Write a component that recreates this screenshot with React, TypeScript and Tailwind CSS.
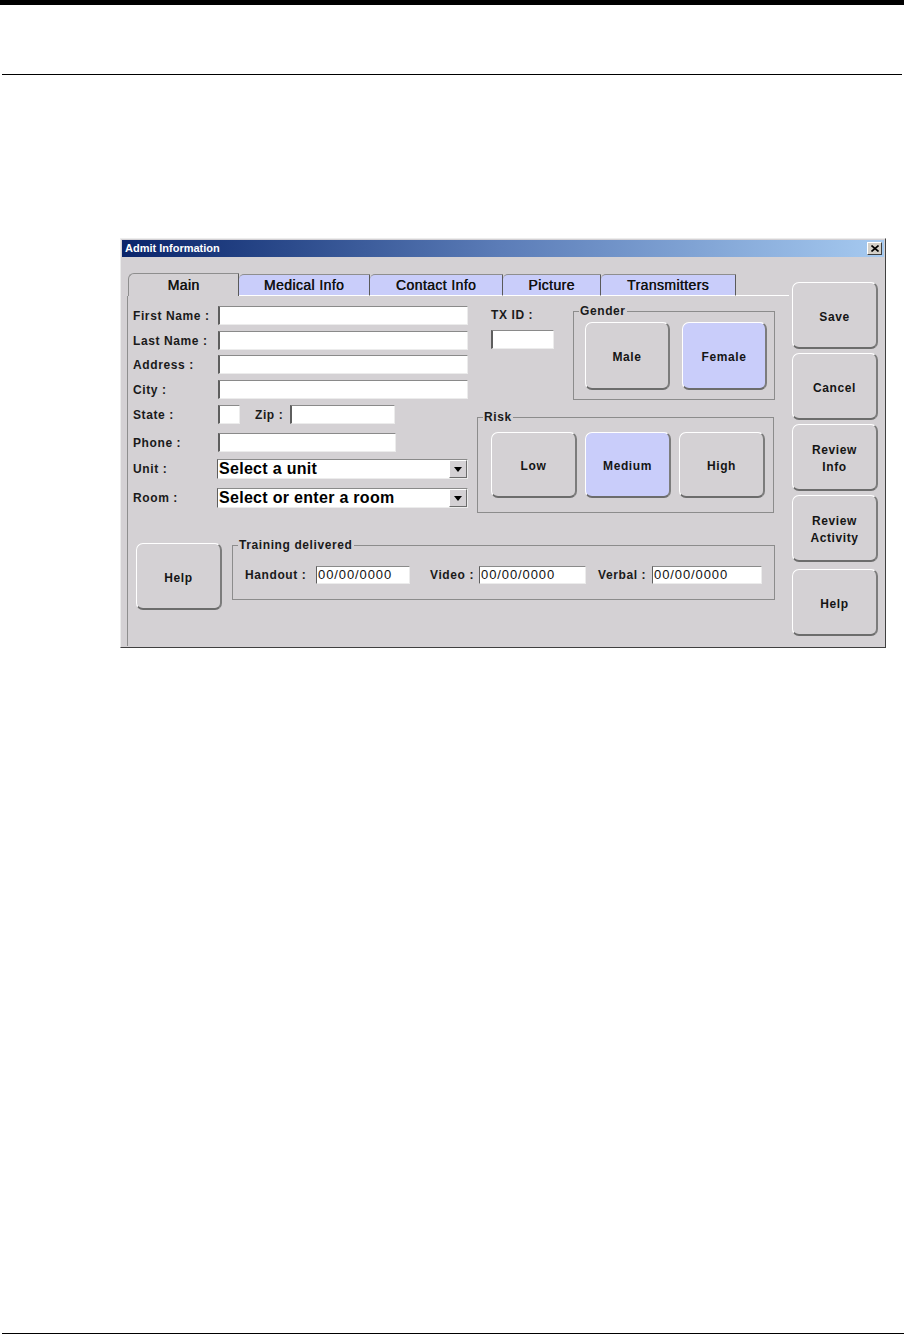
import React from "react";

// Swing-style "Admit Information" dialog, printed on a manual page

const BODY_BG = "bg-[#d4d1d4]";

function Btn({
  children,
  className = "",
  active = false,
}: {
  children: React.ReactNode;
  className?: string;
  active?: boolean;
}) {
  return (
    <button
      className={`flex flex-col items-center justify-center rounded-[7px] border-t-[1.5px] border-l-[1.5px] border-t-white border-l-white border-r-2 border-b-2 border-r-[#7c7c7c] border-b-[#6c6c6c] pt-[4px] text-[12px] font-bold leading-[17px] tracking-[0.6px] text-[#151515] ${
        active ? "bg-[#c9cdfa]" : "bg-[#d4d1d4]"
      } ${className}`}
    >
      {children}
    </button>
  );
}

function Field({ className = "", children }: { className?: string; children?: React.ReactNode }) {
  return (
    <div
      className={`h-[19px] bg-white border-t border-t-[#8a8a8a] border-l-2 border-l-[#5e5e5e] border-b border-b-[#ececec] border-r border-r-[#ececec] ${className}`}
    >
      {children}
    </div>
  );
}

function DateField({ className = "" }: { className?: string }) {
  return (
    <div
      className={`h-[18px] bg-white border-t border-t-[#8a8a8a] border-l border-l-[#5e5e5e] border-b border-b-[#ececec] border-r border-r-[#ececec] pl-[1px] text-[13px] leading-[16px] tracking-[0.9px] text-[#111] ${className}`}
    >
      00/00/0000
    </div>
  );
}

function Combo({ text }: { text: string }) {
  return (
    <div className="flex h-[20px] w-[251px] items-stretch bg-white border-t border-t-[#8a8a8a] border-l border-l-[#5e5e5e] border-b border-b-[#ececec] border-r border-r-[#ececec]">
      <div className="flex-1 pl-[1px] text-[16px] font-bold leading-[18px] tracking-[0.3px] text-black">{text}</div>
      <div className="flex w-[18px] items-center justify-center bg-[#d4d1d4] border-t border-l border-t-white border-l-white border-r border-b border-r-[#6c6c6c] border-b-[#6c6c6c]">
        <svg width="8" height="5" viewBox="0 0 8 5">
          <polygon points="0,0 8,0 4,5" fill="#000" />
        </svg>
      </div>
    </div>
  );
}

function Label({ children, className = "" }: { children: React.ReactNode; className?: string }) {
  return (
    <span className={`shrink-0 text-[12px] font-bold leading-[14px] tracking-[0.6px] text-[#1a1a1a] ${className}`}>
      {children}
    </span>
  );
}

function Tab({ children, className = "" }: { children: React.ReactNode; className?: string }) {
  return (
    <div
      className={`flex h-[22px] items-center justify-center rounded-tl-[5px] border-t border-t-[#8e8e8e] border-r border-r-[#5a5a5a] border-b border-b-white bg-[#c9cdfa] text-[14px] leading-[16px] tracking-[0.4px] text-[#111] [text-shadow:0.4px_0_0_#111] ${className}`}
    >
      {children}
    </div>
  );
}

function Group({
  title,
  className = "",
  children,
}: {
  title: string;
  className?: string;
  children: React.ReactNode;
}) {
  return (
    <fieldset className={`border border-[#8c8c8c] pl-[5px] ${className}`}>
      <legend className="px-[1px] text-[12px] font-bold leading-[14px] tracking-[0.6px] text-[#1a1a1a]">{title}</legend>
      {children}
    </fieldset>
  );
}

export default function App() {
  return (
    <div className="flex h-[1335px] w-[904px] flex-col bg-white font-['Liberation_Sans',Arial,Helvetica,sans-serif]">
      <div className="h-[5px] bg-black" />
      <div className="mx-[2px] mt-[69px] h-px bg-black" />

      {/* dialog window */}
      <div className={`ml-[120px] mt-[163px] h-[410px] w-[766px] border border-t-[#ececec] border-l-[#ececec] border-r-[#404040] border-b-[#404040] p-[1px] ${BODY_BG}`}>
        <div className="flex h-[17px] items-center justify-between bg-gradient-to-r from-[#0a246a] via-[#5c7db8] to-[#a6caf0] pl-[3px] pr-[2px]">
          <span className="text-[11px] font-bold leading-[13px] text-white">Admit Information</span>
          <div className="flex h-[13px] w-[15px] items-center justify-center bg-[#d4d0c8] border-t border-l border-t-white border-l-white border-r border-b border-r-[#404040] border-b-[#404040]">
            <svg width="8" height="7" viewBox="0 0 8 7">
              <path d="M0.5 0.5 L7.5 6.5 M7.5 0.5 L0.5 6.5" stroke="#000" strokeWidth="1.6" />
            </svg>
          </div>
        </div>

        <div className="flex h-[389px]">
          {/* tabs + panel */}
          <div className="ml-[5px] flex w-[662px] flex-col pt-[16px]">
            <div className="flex h-[23px] items-end">
              <div className="ml-px flex h-[23px] w-[111px] items-center justify-center rounded-tl-[6px] border-t border-l border-t-[#8e8e8e] border-l-[#8e8e8e] border-r border-r-[#5a5a5a] bg-[#d4d1d4] text-[14px] leading-[16px] tracking-[0.4px] text-[#111] [text-shadow:0.4px_0_0_#111]">
                Main
              </div>
              <Tab className="w-[131px]">Medical Info</Tab>
              <Tab className="w-[133px]">Contact Info</Tab>
              <Tab className="w-[98px]">Picture</Tab>
              <Tab className="w-[135px]">Transmitters</Tab>
              <div className="h-[22px] flex-1 border-b border-b-white" />
            </div>

            <div className="flex flex-1 flex-col border-l border-l-[#8e8e8e]">
              {/* row A */}
              <div className="mt-[8px] flex items-start">
                <div className="ml-[5px] flex w-[335px] flex-col pt-[2px]">
                  <div className="flex h-[19px] items-center">
                    <Label className="w-[85px]">First Name :</Label>
                    <Field className="w-[250px]" />
                  </div>
                  <div className="mt-[6px] flex h-[19px] items-center">
                    <Label className="w-[85px]">Last Name :</Label>
                    <Field className="w-[250px]" />
                  </div>
                  <div className="mt-[5px] flex h-[19px] items-center">
                    <Label className="w-[85px]">Address :</Label>
                    <Field className="w-[250px]" />
                  </div>
                  <div className="mt-[6px] flex h-[19px] items-center">
                    <Label className="w-[85px]">City :</Label>
                    <Field className="w-[250px]" />
                  </div>
                  <div className="mt-[6px] flex h-[19px] items-center">
                    <Label className="w-[85px]">State :</Label>
                    <Field className="w-[22px]" />
                    <Label className="ml-[15px] w-[35px]">Zip :</Label>
                    <Field className="w-[105px]" />
                  </div>
                  <div className="mt-[9px] flex h-[19px] items-center">
                    <Label className="w-[85px]">Phone :</Label>
                    <Field className="w-[178px]" />
                  </div>
                  <div className="mt-[7px] flex h-[20px] items-center">
                    <Label className="w-[84px]">Unit :</Label>
                    <Combo text="Select a unit" />
                  </div>
                  <div className="mt-[9px] flex h-[20px] items-center">
                    <Label className="w-[84px]">Room :</Label>
                    <Combo text="Select or enter a room" />
                  </div>
                </div>

                <div className="ml-[9px] flex w-[298px] flex-col">
                  <div className="flex items-start">
                    <div className="ml-[14px] flex w-[63px] flex-col pt-[4px]">
                      <Label>TX ID :</Label>
                      <Field className="mt-[8px] w-[63px]" />
                    </div>
                    <Group title="Gender" className="ml-[19px] w-[202px] pb-[9px]">
                      <div className="ml-[6px] flex gap-[12px] pt-[4px]">
                        <Btn className="h-[68px] w-[85px]">Male</Btn>
                        <Btn className="h-[68px] w-[85px]" active>
                          Female
                        </Btn>
                      </div>
                    </Group>
                  </div>
                  <Group title="Risk" className="mt-[10px] w-[297px] pb-[14px]">
                    <div className="ml-[8px] flex gap-[8px] pt-[8px]">
                      <Btn className="h-[66px] w-[86px]">Low</Btn>
                      <Btn className="h-[66px] w-[86px]" active>
                        Medium
                      </Btn>
                      <Btn className="h-[66px] w-[86px]">High</Btn>
                    </div>
                  </Group>
                </div>
              </div>

              {/* row B */}
              <div className="mt-[25px] flex items-start">
                <Btn className="ml-[8px] mt-[5px] h-[67px] w-[86px]">Help</Btn>
                <Group title="Training delivered" className="ml-[10px] w-[543px] pb-[15px]">
                  <div className="ml-[7px] flex items-center pt-[14px]">
                    <Label className="w-[71px]">Handout :</Label>
                    <DateField className="w-[94px]" />
                    <Label className="ml-[20px] w-[49px]">Video :</Label>
                    <DateField className="w-[107px]" />
                    <Label className="ml-[12px] w-[54px]">Verbal :</Label>
                    <DateField className="w-[110px]" />
                  </div>
                </Group>
              </div>
            </div>
          </div>

          {/* right-hand command buttons */}
          <div className="ml-[3px] flex w-[86px] flex-col pt-[25px]">
            <Btn className="h-[67px] w-[86px]">Save</Btn>
            <Btn className="mt-[4px] h-[67px] w-[86px]">Cancel</Btn>
            <Btn className="mt-[4px] h-[67px] w-[86px]">
              <span>Review</span>
              <span>Info</span>
            </Btn>
            <Btn className="mt-[4px] h-[67px] w-[86px]">
              <span>Review</span>
              <span>Activity</span>
            </Btn>
            <Btn className="mt-[7px] h-[67px] w-[86px]">Help</Btn>
          </div>
        </div>
      </div>

      <div className="flex-1" />
      <div className="mb-[1px] ml-[2px] h-px bg-black" />
    </div>
  );
}
